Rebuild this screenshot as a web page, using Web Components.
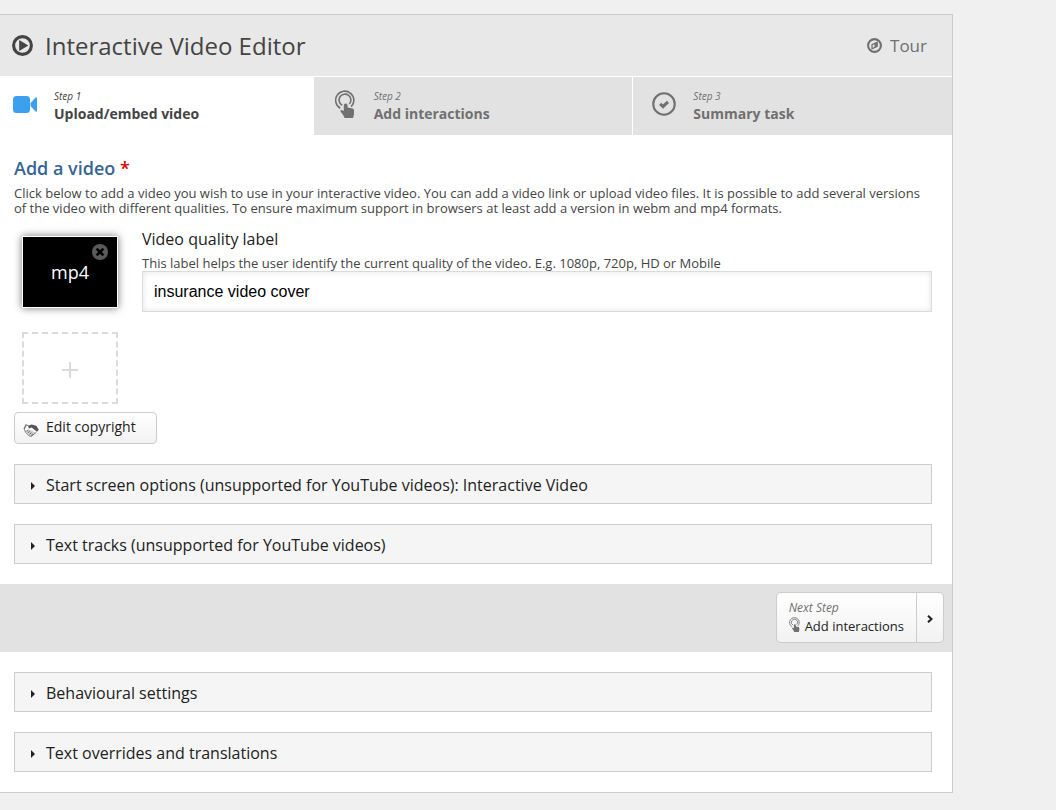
<!DOCTYPE html>
<html lang="en">
<head>
<meta charset="utf-8">
<meta name="viewport" content="width=device-width, initial-scale=1">
<title>Interactive Video Editor</title>
<style>
  body { margin: 0; padding: 14px 103px 17px 0; background: #f0f0f0; font-family: "Open Sans", "Liberation Sans", sans-serif; font-size: 16px; color: #222; }
</style>
</head>
<body>
<video-editor></video-editor>
<script>
const ICONS = {
  play: ['0 0 21 21', '<circle cx="10.500" cy="10.500" r="8.900" fill="none" stroke="currentColor" stroke-width="3.100"/><path d="M7.200 5v11L16.300 10.500z" fill="currentColor"/>'],
  compass: ['0 0 15 15', '<circle cx="7.500" cy="7.500" r="6.400" fill="none" stroke="currentColor" stroke-width="2.100"/><path d="M10.200 4.300v4L5 10.800V6.700z" fill="none" stroke="currentColor" stroke-width="1.300"/><path d="M10 4.500v3.800L7.500 9.500v-3.800z" fill="currentColor"/>'],
  camera: ['0 0 24 17', '<rect x="0" y="0" width="17" height="17" rx="3.500" fill="currentColor"/><path d="M17.500 7 22.600 1.600Q24 .6 24 2v13q0 1.400-1.400.4L17.500 10z" fill="currentColor"/>'],
  touch: ['0 0 20 28', '<g fill="none" stroke="currentColor"><path d="M5.300 18.200A9.100 9.100 0 1 1 16.200 16.700" stroke-width="1.600"/><path d="M7.200 15.200A5.900 5.900 0 1 1 14.300 14" stroke-width="1.600"/></g><path d="M8.800 15.500a1.900 1.900 0 0 1 3.800 0v2.100l4.900 1q1.500.3 1.500 1.800v3.800L18 28H9.600l-1.500-3-2.600-3.400q-.6-1.900 1.200-1.700L8.800 21z" fill="currentColor"/>'],
  check: ['0 0 25 25', '<circle cx="12.500" cy="12.500" r="11.200" fill="none" stroke="currentColor" stroke-width="2.200"/><path d="m8.500 12.400 3 2.900 5.100-5" fill="none" stroke="currentColor" stroke-width="3.200"/>'],
  remove: ['0 0 16 16', '<circle cx="8" cy="8" r="8" fill="#5a5a5a"/><path d="m4.600 4.600 6.800 6.800m0-6.800-6.800 6.800" stroke="#000" stroke-width="2.600"/>'],
  plus: ['0 0 16 16', '<path d="M8 0v16M0 8h16" stroke="currentColor" stroke-width="2"/>'],
  shake: ['0 0 16 14', '<path d="M2.700 1 .4 5.800l1.200.8L4 1.800z" fill="currentColor" opacity=".8"/><path d="M5 3 8.500 1.600l4.800 1.200 2.500 4-1.800 1.900L8.600 4.600 6 5.500z" fill="currentColor"/><path d="m1.400 6.400 1.200 3 3.600 3.400 2 .6 5-4M3.800 2.200l2 .6M3.400 8.400l2-1.500M4.800 10l2-2M6.500 11.500l1.800-2M8.500 12.500l1.100-1.600" fill="none" stroke="currentColor" stroke-width=".8"/><path d="m3 8 3-1.500 6.400 3-4 3-1.900-.5z" fill="currentColor" opacity=".25"/>'],
  right: ['0 0 4 8', '<path d="M0 0 4 4 0 8z" fill="currentColor"/>'],
  chevron: ['0 0 6 8', '<path d="m1 .7 3.500 3.300L1 7.300" fill="none" stroke="currentColor" stroke-width="2"/>']
};

function define(name, html, setup) {
  const template = document.createElement('template');
  template.innerHTML = html;
  customElements.define(name, class extends HTMLElement {
    connectedCallback() {
      if (this.shadowRoot) return;
      this.attachShadow({ mode: 'open' }).append(template.content.cloneNode(true));
      if (setup) setup(this, this.shadowRoot);
    }
  });
}

define('ui-icon', `<style>
  :host { display: inline-block; flex: none; }
  svg { display: block; width: 100%; height: 100%; }
</style><svg aria-hidden="true"></svg>`, (host, root) => {
  const [box, shapes] = ICONS[host.getAttribute('name')];
  const svg = root.querySelector('svg');
  svg.setAttribute('viewBox', box);
  svg.innerHTML = shapes;
});

define('editor-header', `<style>
  :host { display: flex; align-items: center; height: 61px; padding: 0 25px 0 18px; background: #e8e8e8; color: #444; }
  h1 { flex: 1; margin: 0 0 0 12px; font-size: 24px; line-height: 32px; font-weight: 400; }
  .logo { width: 21px; height: 21px; }
  button { display: flex; align-items: center; gap: 8px; padding: 0; border: 0; background: none; font: inherit; font-size: 17px; line-height: 24px; color: #707070; cursor: pointer; }
  button ui-icon { width: 15px; height: 15px; }
</style>
<ui-icon class="logo" name="play"></ui-icon>
<h1><slot></slot></h1>
<button type="button"><ui-icon name="compass"></ui-icon>Tour</button>`);

define('step-tab', `<style>
  :host { display: block; box-sizing: border-box; flex: 1 1 0; border-right: 1px solid #fff; }
  :host(:last-of-type) { border-right: 0; }
  button { display: flex; box-sizing: border-box; width: 100%; height: 58px; padding: 10px 19px; border: 0; background: #e2e2e2; color: #707070; font: inherit; text-align: left; cursor: pointer; }
  :host([active]) button { background: #fff; color: #444; }
  .icon { display: flex; justify-content: center; align-items: center; width: 24px; height: 34px; margin-right: 17px; }
  :host([active]) .icon { color: #3ba1ee; }
  ui-icon { width: 24px; height: 24px; }
  ui-icon[name=camera] { height: 17px; }
  ui-icon[name=touch] { width: 20px; height: 28px; }
  .text { display: block; }
  small { display: block; font-size: 10px; line-height: 18px; font-style: italic; }
  b { display: block; font-size: 14px; line-height: 18px; font-weight: 700; }
</style>
<button type="button"><span class="icon"></span><span class="text"><small></small><b><slot></slot></b></span></button>`, (host, root) => {
  const icon = document.createElement('ui-icon');
  icon.setAttribute('name', host.getAttribute('icon'));
  root.querySelector('.icon').append(icon);
  root.querySelector('small').textContent = host.getAttribute('step');
});

define('field-description', `<style>
  :host { display: block; font-size: 13px; line-height: 15px; color: #444; }
</style><slot></slot>`);

define('video-thumb', `<style>
  :host { display: block; box-sizing: border-box; position: relative; width: 96px; height: 72px; margin: 8px; border: 1px solid #fff; background: #000; color: #fff; box-shadow: 0 0 8px #777; text-align: center; line-height: 70px; font-size: 18px; }
  button { position: absolute; top: 7px; right: 9px; padding: 0; border: 0; background: none; cursor: pointer; }
  ui-icon { display: block; width: 16px; height: 16px; }
</style><slot></slot><button type="button" aria-label="Remove file"><ui-icon name="remove"></ui-icon></button>`);

define('video-source', `<style>
  :host { display: flex; align-items: flex-start; gap: 16px; }
  .field { flex: 1; min-width: 0; }
  label { display: block; line-height: 22px; margin-bottom: 6px; }
  input { display: block; box-sizing: border-box; width: 100%; height: 41px; padding: 0 11px; border: 1px solid #dbdbdb; border-radius: 0; background: #fff; box-shadow: inset 0 0 6px #e4e4e4; font: 16px "Liberation Sans", Arial, sans-serif; color: #000; outline: 0; }
</style>
<video-thumb>mp4</video-thumb>
<div class="field">
  <label for="quality">Video quality label</label>
  <field-description>This label helps the user identify the current quality of the video. E.g. 1080p, 720p, HD or Mobile</field-description>
  <input id="quality" type="text" value="insurance video cover">
</div>`);

define('add-source', `<style>
  :host { display: block; padding: 8px; }
  button { display: grid; place-items: center; box-sizing: border-box; width: 96px; height: 72px; padding: 0; border: 2px dashed #dbdbdb; background: none; color: #dbdbdb; cursor: pointer; }
  ui-icon { width: 16px; height: 16px; margin-top: 4px; }
</style><button type="button" aria-label="Add video"><ui-icon name="plus"></ui-icon></button>`);

define('copyright-button', `<style>
  :host { display: block; }
  button { display: flex; align-items: center; gap: 7px; height: 32px; padding: 0 20px 0 8px; border: 1px solid #ccc; border-radius: 4px; background: linear-gradient(#fff, #f2f2f2); font: inherit; font-size: 14px; line-height: 28px; color: #222; cursor: pointer; }
  ui-icon { width: 16px; height: 14px; margin-top: 4px; color: #555; }
  span { padding-bottom: 2px; }
</style><button type="button"><ui-icon name="shake"></ui-icon><span><slot></slot></span></button>`);

define('collapsed-group', `<style>
  :host { display: block; margin: 20px; }
  button { display: flex; align-items: center; box-sizing: border-box; width: 100%; height: 40px; padding: 0 16px; gap: 11px; border: 1px solid #ccc; background: #f5f5f5; font: inherit; line-height: 24px; color: #222; text-align: left; cursor: pointer; }
  ui-icon { width: 4px; height: 8px; margin-top: 4px; }
  span { padding-top: 2px; }
</style><button type="button" aria-expanded="false"><ui-icon name="right"></ui-icon><span><slot></slot></span></button>`);

define('next-step', `<style>
  :host { display: flex; justify-content: flex-end; padding: 8px; background: #e2e2e2; }
  button { display: flex; align-items: stretch; box-sizing: border-box; height: 51px; margin-bottom: 1px; padding: 0; border: 1px solid #ccc; border-radius: 5px; background: linear-gradient(#fff, #f2f2f2); font: inherit; font-size: 13px; line-height: 18px; color: #222; text-align: left; cursor: pointer; }
  .text { padding: 6px 12px 0; }
  small { display: block; font-size: 12px; font-style: italic; color: #707070; }
  .line { display: flex; gap: 5px; }
  .line ui-icon { width: 11px; height: 15px; color: #707070; }
  .arrow { display: grid; place-items: center; width: 26px; border-left: 1px solid #ccc; }
  .arrow ui-icon { width: 6px; height: 8px; margin-top: 3px; }
</style><button type="button"><span class="text"><small>Next Step</small><span class="line"><ui-icon name="touch"></ui-icon><slot></slot></span></span><span class="arrow"><ui-icon name="chevron"></ui-icon></span></button>`);

/* The panel's left edge tucks just outside the viewport. */
define('video-editor', `<style>
  :host { display: block; margin-left: -7px; border: 1px solid #ccc; background: #fff; }
  nav { display: flex; padding-top: 1px; }
  .source { padding: 20px 20px 0; }
  h2 { margin: 0 0 4px; font-size: 18px; line-height: 27px; font-weight: 600; color: #356593; }
  h2 span { color: #da0001; }
  video-source { margin: 12px 0 8px; }
</style>
<editor-header>Interactive Video Editor</editor-header>
<nav>
  <step-tab icon="camera" step="Step 1" active>Upload/embed video</step-tab>
  <step-tab icon="touch" step="Step 2">Add interactions</step-tab>
  <step-tab icon="check" step="Step 3">Summary task</step-tab>
</nav>
<div class="source">
  <h2>Add a video <span>*</span></h2>
  <field-description>Click below to add a video you wish to use in your interactive video. You can add a video link or upload video files. It is possible to add several versions of the video with different qualities. To ensure maximum support in browsers at least add a version in webm and mp4 formats.</field-description>
  <video-source></video-source>
  <add-source></add-source>
  <copyright-button>Edit copyright</copyright-button>
</div>
<collapsed-group>Start screen options (unsupported for YouTube videos): Interactive Video</collapsed-group>
<collapsed-group>Text tracks (unsupported for YouTube videos)</collapsed-group>
<next-step>Add interactions</next-step>
<collapsed-group>Behavioural settings</collapsed-group>
<collapsed-group>Text overrides and translations</collapsed-group>`);
</script>
</body>
</html>
